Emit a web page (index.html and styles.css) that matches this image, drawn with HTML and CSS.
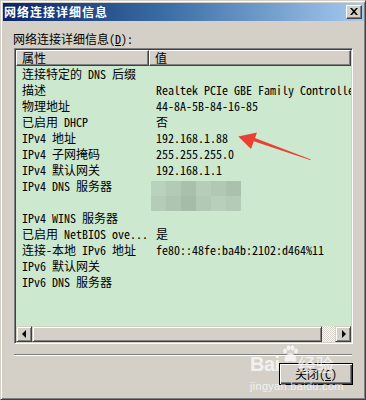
FILE: index.html
```html
<!DOCTYPE html>
<html>
<head>
<meta charset="utf-8">
<link rel="stylesheet" href="styles.css">
</head>
<body>
<div class="window">
  <div class="titlebar">
    <span class="title">网络连接详细信息</span>
    <div class="close"><svg width="8" height="7" viewBox="0 0 8 7"><path d="M0 0h2l2 2.2L6 0h2L5 3.5 8 7H6L4 4.8 2 7H0l3-3.5z" fill="#000"/></svg></div>
  </div>
  <div class="client">
    <div class="label">网络连接详细信息(<u>D</u>):</div>
    <div class="listbox">
      <div class="header">
        <div class="hcell c1">属性</div>
        <div class="hcell c2">值</div>
      </div>
      <div class="rows">
        <div class="row"><span class="c1">连接特定的 DNS 后缀</span><span class="c2"></span></div>
        <div class="row"><span class="c1">描述</span><span class="c2">Realtek PCIe GBE Family Controller</span></div>
        <div class="row"><span class="c1">物理地址</span><span class="c2">44-8A-5B-84-16-85</span></div>
        <div class="row"><span class="c1">已启用 DHCP</span><span class="c2">否</span></div>
        <div class="row"><span class="c1">IPv4 地址</span><span class="c2">192.168.1.88</span></div>
        <div class="row"><span class="c1">IPv4 子网掩码</span><span class="c2">255.255.255.0</span></div>
        <div class="row"><span class="c1">IPv4 默认网关</span><span class="c2">192.168.1.1</span></div>
        <div class="row"><span class="c1">IPv4 DNS 服务器</span><span class="c2"></span></div>
        <div class="row"><span class="c1"></span><span class="c2"></span></div>
        <div class="row"><span class="c1">IPv4 WINS 服务器</span><span class="c2"></span></div>
        <div class="row"><span class="c1">已启用 NetBIOS ove...</span><span class="c2">是</span></div>
        <div class="row"><span class="c1">连接-本地 IPv6 地址</span><span class="c2">fe80::48fe:ba4b:2102:d464%11</span></div>
        <div class="row"><span class="c1">IPv6 默认网关</span><span class="c2"></span></div>
        <div class="row"><span class="c1">IPv6 DNS 服务器</span><span class="c2"></span></div>
      </div>
      <div class="hscroll">
        <div class="sbtn"><span class="tri-left"></span></div>
        <div class="thumb"></div>
        <div class="track"></div>
        <div class="sbtn"><span class="tri-right"></span></div>
      </div>
    </div>
    <div class="sep"></div>
    <div class="footer">
      <div class="btn">关闭(<u>C</u>)</div>
    </div>
  </div>

  <div class="redact">
    <i class="t1"></i><i class="t2"></i><i class="t3"></i><i class="t4"></i><i class="t5"></i><i class="t6"></i>
    <i class="t7"></i><i class="t8"></i><i class="t9"></i><i class="t10"></i><i class="t11"></i><i class="t12"></i>
  </div>

  <svg class="arrow" width="366" height="400" viewBox="0 0 366 400">
    <polygon points="237.3,135.5 256,131.5 250,148" fill="#ea4034"/>
    <polygon points="249,139 252.5,136.5 310,158.5 309,159" fill="#ea4034"/>
  </svg>

  <div class="watermark">
    <div class="wm-top"><span class="bai">Bai</span><svg class="paw" width="18" height="18" viewBox="0 0 18 18"><ellipse cx="4" cy="6" rx="2" ry="2.6" fill="currentColor"/><ellipse cx="7.5" cy="2.8" rx="2" ry="2.6" fill="currentColor"/><ellipse cx="11.5" cy="2.8" rx="2" ry="2.6" fill="currentColor"/><ellipse cx="15" cy="6" rx="2" ry="2.6" fill="currentColor"/><path d="M9.5 8c-3 0-6 4-6 6.5 0 2 2 2.5 3 2.2 1.2-.3 2-.6 3-.6s1.8.3 3 .6c1 .3 3-.2 3-2.2C15.5 12 12.5 8 9.5 8z" fill="currentColor"/></svg><span class="jy">经验</span></div>
    <div class="wm-url">jingyan.baidu.com</div>
  </div>
</div>
</body>
</html>
```
FILE: styles.css
```css
html, body {
  margin: 0;
  padding: 0;
  background: #d4d0c8;
}
.window {
  position: relative;
  box-sizing: border-box;
  width: 366px;
  height: 400px;
  background: #d4d0c8;
  border: 1px solid;
  border-color: #d4d0c8 #404040 #404040 #d4d0c8;
  box-shadow: inset 1px 1px #fff, inset -1px -1px #808080;
  padding: 2px 1px 1px 2px;
  font-family: "Noto Sans Mono CJK SC", "Noto Sans CJK SC", monospace;
  font-size: 12px;
  color: #000;
  overflow: hidden;
}
.titlebar {
  height: 18px;
  display: flex;
  align-items: center;
  justify-content: space-between;
  background: linear-gradient(90deg, #0a246a 0%, #3a6ea5 45%, #a6caf0 100%);
  padding: 0 2px 0 1px;
}
.title {
  color: #fff;
  font-weight: bold;
  font-size: 12px;
  letter-spacing: 1px;
  line-height: 18px;
  font-family: "Noto Sans CJK SC", sans-serif;
}
.close {
  box-sizing: border-box;
  width: 16px;
  height: 14px;
  background: #d4d0c8;
  border: 1px solid;
  border-color: #fff #404040 #404040 #fff;
  box-shadow: inset -1px -1px #808080;
  display: flex;
  align-items: center;
  justify-content: center;
  padding-bottom: 1px;
}
.client {
  display: flex;
  flex-direction: column;
}
.label {
  margin: 12px 0 0 10px;
  height: 12px;
  line-height: 12px;
}
.label u, .btn u {
  text-decoration: underline;
  text-underline-offset: 1px;
}
.listbox {
  box-sizing: border-box;
  margin: 3px 0 0 11px;
  width: 339px;
  height: 296px;
  border: 1px solid;
  border-color: #808080 #fff #fff #808080;
  box-shadow: inset 1px 1px #404040, inset -1px -1px #d4d0c8;
  padding: 1px;
  display: flex;
  flex-direction: column;
}
.header {
  display: flex;
  height: 16px;
  flex: none;
}
.hcell {
  box-sizing: border-box;
  height: 16px;
  line-height: 14px;
  border: 1px solid;
  border-color: #fff #404040 #404040 #fff;
  box-shadow: inset -1px -1px #808080;
  background: #d4d0c8;
  padding-left: 5px;
  white-space: nowrap;
}
.header .c1 { width: 133px; }
.header .c2 { flex: 1; }
.rows {
  flex: 1;
  background: #cce8cf;
  overflow: hidden;
}
.row {
  display: flex;
  height: 16px;
  line-height: 16px;
  white-space: nowrap;
}
.row .c1 {
  width: 133px;
  flex: none;
  box-sizing: border-box;
  padding-left: 6px;
  overflow: hidden;
}
.row .c2 {
  flex: 1;
  padding-left: 7px;
  overflow: hidden;
}
.hscroll {
  height: 16px;
  flex: none;
  display: flex;
}
.sbtn, .thumb {
  box-sizing: border-box;
  height: 16px;
  background: #d4d0c8;
  border: 1px solid;
  border-color: #d4d0c8 #404040 #404040 #d4d0c8;
  box-shadow: inset 1px 1px #fff, inset -1px -1px #808080;
}
.sbtn {
  width: 16px;
  display: flex;
  align-items: center;
  justify-content: center;
}
.thumb { width: 290px; }
.track {
  flex: 1;
  background: repeating-conic-gradient(#fff 0 25%, #d4d0c8 0 50%) 0 0 / 2px 2px;
}
.tri-left {
  width: 0;
  height: 0;
  border-top: 4px solid transparent;
  border-bottom: 4px solid transparent;
  border-right: 4px solid #000;
  margin-right: 1px;
}
.tri-right {
  width: 0;
  height: 0;
  border-top: 4px solid transparent;
  border-bottom: 4px solid transparent;
  border-left: 4px solid #000;
  margin-left: 1px;
}
.sep {
  margin: 10px 0 0 11px;
  width: 338px;
  height: 0;
  border-top: 1px solid #808080;
  border-bottom: 1px solid #fff;
}
.footer {
  display: flex;
  padding-left: 276px;
  margin-top: 7px;
}
.btn {
  box-sizing: border-box;
  width: 74px;
  height: 22px;
  border: 1px solid #000;
  box-shadow: inset 1px 1px #fff, inset -1px -1px #404040, inset -2px -2px #808080;
  display: flex;
  align-items: center;
  justify-content: center;
  line-height: 12px;
}
.redact {
  position: absolute;
  left: 150px;
  top: 180px;
  width: 90px;
  height: 30px;
  display: grid;
  grid-template-columns: 15px 15px 15px 15px 15px 15px;
  grid-template-rows: 15px 15px;
}
.redact i { display: block; }
.t1 { background: #b9d2bd; }
.t2 { background: #b2cbb6; }
.t3 { background: #a8c0ac; }
.t4 { background: #b6ceb9; }
.t5 { background: #b0c8b4; }
.t6 { background: #a9c1ad; }
.t7 { background: #b4ccb8; }
.t8 { background: #adc5b1; }
.t9 { background: #a4bca8; }
.t10 { background: #b1c9b5; }
.t11 { background: #b7cfbb; }
.t12 { background: #b3cbb7; }
.arrow {
  position: absolute;
  left: 0;
  top: 0;
  pointer-events: none;
}
.watermark {
  position: absolute;
  left: 249px;
  top: 344px;
  color: rgba(255, 255, 255, 0.72);
  font-family: "Liberation Sans", sans-serif;
  pointer-events: none;
}
.wm-top {
  display: flex;
  align-items: flex-end;
  height: 29px;
}
.bai {
  font-size: 20px;
  font-weight: bold;
  line-height: 20px;
  letter-spacing: -0.5px;
}
.paw {
  align-self: flex-start;
  margin: 0 0 0 1px;
}
.jy {
  font-family: "Noto Sans CJK SC", sans-serif;
  font-size: 18px;
  line-height: 20px;
  margin-left: -1px;
}
.wm-url {
  font-size: 11px;
  line-height: 12px;
  margin-top: 6px;
  letter-spacing: 0.3px;
}
```
